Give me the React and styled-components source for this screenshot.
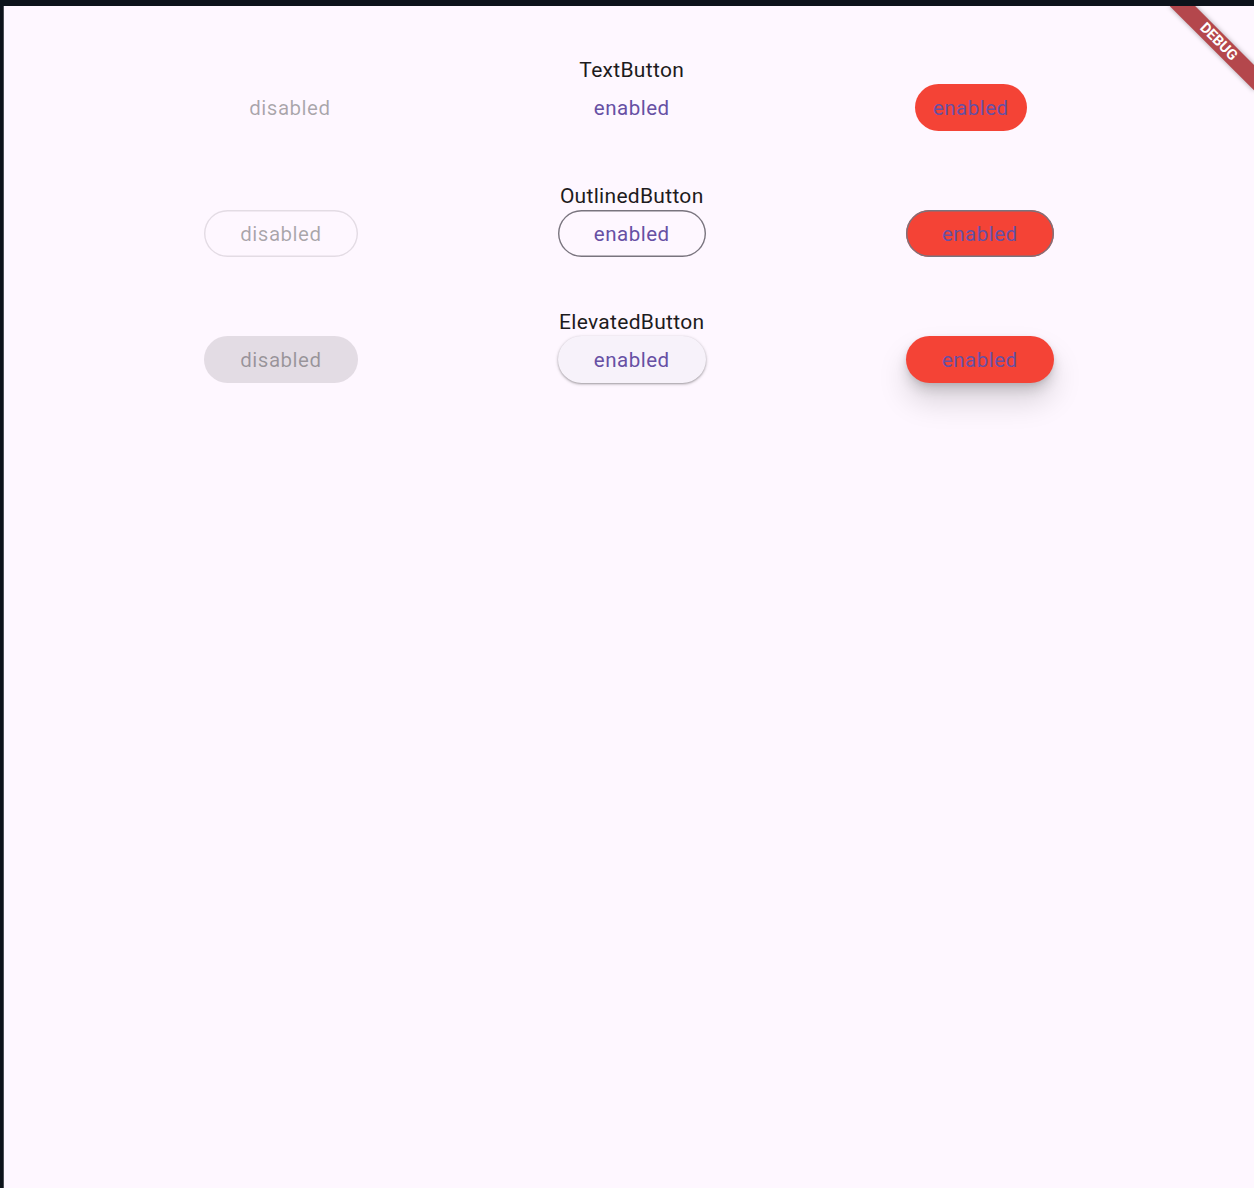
import React from "react";
import styled, { createGlobalStyle, css } from "styled-components";

const GlobalStyle = createGlobalStyle`
  html, body { margin: 0; padding: 0; background: #0d131b; }
  * { box-sizing: border-box; }
`;

const Frame = styled.div`
  padding: 6px 0 0 3px;
  height: 1188px;
  overflow: hidden;
`;

const Screen = styled.main`
  position: relative;
  overflow: hidden;
  height: 1182px;
  background: #fef7ff;
  border-left: 1px solid #4a4e55;
  padding-top: 52px;
  font-family: Roboto, "Noto Sans", sans-serif;
  display: flex;
  flex-direction: column;
  gap: 53px;
`;

const Row = styled.section`
  display: flex;
  justify-content: space-evenly;
  align-items: flex-end;
`;

const Column = styled.div`
  display: flex;
  flex-direction: column;
  align-items: center;
  gap: 2px;
`;

const Title = styled.div`
  font-size: 21px;
  line-height: 24px;
  letter-spacing: 0.3px;
  color: #1d1b20;
  font-weight: 400;
`;

const variants = {
  text: css`
    padding: 0 18px;
    background: transparent;
  `,
  outlined: css`
    padding: 0 36px;
    background: transparent;
    box-shadow: inset 0 0 0 1.4px #79747e;
  `,
  elevated: css`
    padding: 0 36px;
    background: #f7f2fa;
    box-shadow: 0 1px 2px rgba(0, 0, 0, 0.28), 0 1px 3px 1px rgba(0, 0, 0, 0.1);
  `,
};

const disabledVariants = {
  text: css``,
  outlined: css`
    box-shadow: inset 0 0 0 1.4px rgba(29, 27, 32, 0.12);
  `,
  elevated: css`
    background: rgba(29, 27, 32, 0.12);
    box-shadow: none;
  `,
};

const redVariants = {
  text: css`
    background: #f44336;
  `,
  outlined: css`
    background: #f44336;
    box-shadow: inset 0 0 0 1.4px #79747e;
  `,
  elevated: css`
    background: #f44336;
    box-shadow: 0 18px 30px rgba(0, 0, 0, 0.15), 0 7px 12px rgba(0, 0, 0, 0.12),
      0 2px 4px rgba(0, 0, 0, 0.08);
  `,
};

const Button = styled.button`
  height: 47px;
  border: none;
  border-radius: 24px;
  font-family: Roboto, "Noto Sans", sans-serif;
  font-size: 20.5px;
  font-weight: 400;
  letter-spacing: 0.5px;
  color: #6750a4;
  cursor: pointer;
  display: inline-flex;
  align-items: center;
  justify-content: center;
  ${(p) => variants[p.$variant]}
  ${(p) =>
    p.disabled &&
    css`
      color: rgba(29, 27, 32, 0.38);
      cursor: default;
      ${disabledVariants[p.$variant]}
    `}
  ${(p) => p.$red && redVariants[p.$variant]}
`;

const Banner = styled.div`
  position: absolute;
  top: 27px;
  right: -23.5px;
  width: 119px;
  height: 17.5px;
  transform: rotate(45deg);
  background: #b4474c;
  box-shadow: 0 0 5px rgba(0, 0, 0, 0.35);
  color: #fff;
  font-family: Roboto, "Noto Sans", sans-serif;
  font-weight: 700;
  font-size: 14.5px;
  line-height: 17.5px;
  text-align: center;
`;

const rows = [
  { variant: "text", title: "TextButton" },
  { variant: "outlined", title: "OutlinedButton" },
  { variant: "elevated", title: "ElevatedButton" },
];

export default function App() {
  return (
    <>
      <GlobalStyle />
      <Frame>
        <Screen>
          {rows.map((r) => (
            <Row key={r.variant}>
              <Button $variant={r.variant} disabled>
                disabled
              </Button>
              <Column>
                <Title>{r.title}</Title>
                <Button $variant={r.variant}>enabled</Button>
              </Column>
              <Button $variant={r.variant} $red>
                enabled
              </Button>
            </Row>
          ))}
          <Banner>DEBUG</Banner>
        </Screen>
      </Frame>
    </>
  );
}
